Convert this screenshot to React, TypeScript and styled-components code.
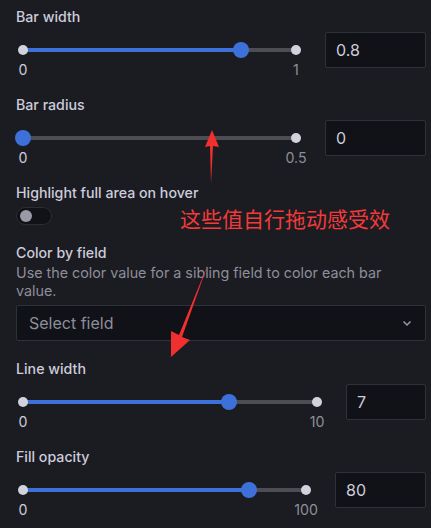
import React from "react";
import styled, { createGlobalStyle } from "styled-components";

const Global = createGlobalStyle`
  html, body { margin: 0; padding: 0; background: #1b1c21; }
  body { font-family: Inter, "Noto Sans", sans-serif; color: #ccccdc; }
  * { box-sizing: border-box; }
`;

const Page = styled.div`
  position: relative;
  width: 431px;
  height: 528px;
  overflow: hidden;
  background: #1b1c21;
  padding: 8px 5px 0 16px;
`;

const Field = styled.div<{ $gap: number }>`
  display: flex;
  flex-direction: column;
  margin-bottom: ${(p) => p.$gap}px;
`;

const Label = styled.div`
  font-size: 14.2px;
  font-weight: 500;
  line-height: 18px;
  color: #ccccdc;
`;

const Description = styled.div`
  font-size: 14.3px;
  line-height: 18px;
  color: #8e8e9a;
  margin-top: 2px;
  padding-right: 10px;
`;

const Row = styled.div`
  display: flex;
  align-items: flex-start;
  height: 36px;
  margin-top: 6px;
`;

const SliderCol = styled.div`
  flex: 1;
  display: flex;
  flex-direction: column;
  padding: 10px 7px 0 7px;
  margin-right: 22px;
`;

const TrackArea = styled.div`
  position: relative;
  height: 16px;
`;

const Rail = styled.div`
  position: absolute;
  left: 0;
  right: 0;
  top: 6px;
  height: 4px;
  background: #4c4e54;
  border-radius: 2px;
`;

const Fill = styled.div`
  position: absolute;
  left: 0;
  top: 6px;
  height: 4px;
  background: #3d71d9;
  border-radius: 2px;
`;

const Dot = styled.div<{ $side: "left" | "right" }>`
  position: absolute;
  top: 3px;
  ${(p) => (p.$side === "left" ? "left: -5px;" : "right: -5px;")}
  width: 10px;
  height: 10px;
  border-radius: 50%;
  background: #d2d2dc;
`;

const Thumb = styled.div`
  position: absolute;
  top: 0;
  width: 16px;
  height: 16px;
  margin-left: -8px;
  border-radius: 50%;
  background: #3d71d9;
`;

const Marks = styled.div`
  display: flex;
  justify-content: space-between;
  margin-top: 4px;
  font-size: 14.2px;
  line-height: 16px;
`;

const Mark = styled.span<{ $muted?: boolean }>`
  width: 0;
  display: flex;
  justify-content: center;
  white-space: nowrap;
  color: ${(p) => (p.$muted ? "#8e8e9a" : "#ccccdc")};
`;

const NumberInput = styled.div<{ $w: number }>`
  width: ${(p) => p.$w}px;
  height: 36px;
  flex: none;
  background: #111217;
  border: 1px solid #2f3138;
  border-radius: 2px;
  display: flex;
  align-items: center;
  padding-left: 10px;
  font-size: 16px;
  color: #ccccdc;
`;

const Toggle = styled.div`
  width: 36px;
  height: 18px;
  margin-top: 5px;
  border-radius: 9px;
  background: #111217;
  border: 1px solid #2b2d33;
  position: relative;
`;

const Knob = styled.div`
  position: absolute;
  left: 3px;
  top: 2px;
  width: 12px;
  height: 12px;
  border-radius: 50%;
  background: #9a99a6;
`;

const Select = styled.div`
  margin-top: 5px;
  height: 36px;
  background: #111217;
  border: 1px solid #2f3138;
  border-radius: 2px;
  display: flex;
  align-items: center;
  justify-content: space-between;
  padding: 0 12px 0 12px;
  font-size: 16px;
  color: #8e8e9a;
`;

const Annotation = styled.div`
  position: absolute;
  left: 180px;
  top: 204px;
  font-family: "Noto Sans CJK SC", sans-serif;
  font-size: 21px;
  line-height: 28px;
  color: #f23a3a;
`;

const Arrows = styled.svg`
  position: absolute;
  left: 0;
  top: 0;
  pointer-events: none;
`;

type SliderProps = { pct: number; min: string; max: string; value: string; inputW: number };

function Slider({ pct, min, max, value, inputW }: SliderProps) {
  return (
    <Row>
      <SliderCol>
        <TrackArea>
          <Rail />
          <Fill style={{ width: `${pct}%` }} />
          <Dot $side="left" />
          <Dot $side="right" />
          <Thumb style={{ left: `${pct}%` }} />
        </TrackArea>
        <Marks>
          <Mark>{min}</Mark>
          <Mark $muted>{max}</Mark>
        </Marks>
      </SliderCol>
      <NumberInput $w={inputW}>{value}</NumberInput>
    </Row>
  );
}

export default function App() {
  return (
    <>
      <Global />
      <Page>
        <Field $gap={28}>
          <Label>Bar width</Label>
          <Slider pct={80} min="0" max="1" value="0.8" inputW={101} />
        </Field>
        <Field $gap={28}>
          <Label>Bar radius</Label>
          <Slider pct={0} min="0" max="0.5" value="0" inputW={101} />
        </Field>
        <Field $gap={19}>
          <Label>Highlight full area on hover</Label>
          <Toggle>
            <Knob />
          </Toggle>
        </Field>
        <Field $gap={19}>
          <Label>Color by field</Label>
          <Description>Use the color value for a sibling field to color each bar value.</Description>
          <Select>
            <span>Select field</span>
            <svg width="12" height="12" viewBox="0 0 12 12">
              <path d="M2.5 4.5 L6 8 L9.5 4.5" fill="none" stroke="#9a99a6" strokeWidth="1.5" />
            </svg>
          </Select>
        </Field>
        <Field $gap={28}>
          <Label>Line width</Label>
          <Slider pct={70} min="0" max="10" value="7" inputW={80} />
        </Field>
        <Field $gap={0}>
          <Label>Fill opacity</Label>
          <Slider pct={80} min="0" max="100" value="80" inputW={91} />
        </Field>
        <Annotation>这些值自行拖动感受效</Annotation>
        <Arrows width="431" height="528" viewBox="0 0 431 528">
          <polygon points="212,130 205,147 210,146 211,184 213,146 219,147" fill="#f22f2f" />
          <polygon points="171,357 171,331 179,335 208,264 182,337 190,340" fill="#f22f2f" />
        </Arrows>
      </Page>
    </>
  );
}
